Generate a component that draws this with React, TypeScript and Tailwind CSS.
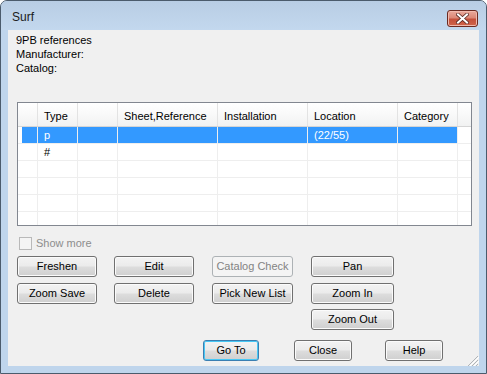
import React from "react";

const btn =
  "h-[21px] rounded-[3px] border border-[#707070] bg-[linear-gradient(#f3f3f3,#ebebeb_48%,#dddddd_52%,#cfcfcf)] shadow-[inset_0_0_0_1px_#fbfbfb] text-[11px] leading-none text-black flex items-center justify-center";
const btnDisabled =
  "h-[21px] rounded-[3px] border border-[#adb2b5] bg-[#f4f4f4] text-[11px] leading-none text-[#838383] flex items-center justify-center";
const btnDefault =
  "h-[21px] rounded-[3px] border border-[#3c7fb1] bg-[linear-gradient(#f3f3f3,#ebebeb_48%,#dddddd_52%,#cfcfcf)] shadow-[inset_0_0_0_1px_#48c8f5] text-[11px] leading-none text-black flex items-center justify-center";

const cols = [
  { w: "w-[40px]", label: "Type" },
  { w: "w-[40px]", label: "" },
  { w: "w-[100px]", label: "Sheet,Reference" },
  { w: "w-[90px]", label: "Installation" },
  { w: "w-[90px]", label: "Location" },
  { w: "w-[60px]", label: "Category" },
];

const rows = [
  { sel: true, cells: ["p", "", "", "", "(22/55)", ""] },
  { sel: false, cells: ["#", "", "", "", "", ""] },
  { sel: false, cells: ["", "", "", "", "", ""] },
  { sel: false, cells: ["", "", "", "", "", ""] },
  { sel: false, cells: ["", "", "", "", "", ""] },
  { sel: false, cells: ["", "", "", "", "", ""] },
];

const Grid = () => (
  <div className="ml-[9px] w-[455px] h-[124px] border border-[#828790] bg-white overflow-hidden">
    {/* header */}
    <div className="flex h-[24px] border-b border-[#d5d5d5] bg-[linear-gradient(#ffffff,#f9f9f9_50%,#f1f2f2)]">
      <div className="w-[20px] border-r border-[#e3e3e3]" />
      {cols.map((c, i) => (
        <div
          key={i}
          className={`${c.w} border-r border-[#e3e3e3] pl-[6px] pt-[3px] flex items-center whitespace-nowrap`}
        >
          {c.label}
        </div>
      ))}
      <div className="flex-1" />
    </div>
    {rows.map((r, i) => (
      <div key={i} className="flex h-[17px] border-b border-[#eeeeee]">
        <div className="w-[20px] border-r border-[#eeeeee] flex">
          {r.sel && <div className="ml-[4px] flex-1 bg-[#3399ff]" />}
        </div>
        {cols.map((c, j) => (
          <div
            key={j}
            className={`${c.w} border-r border-[#eeeeee] pl-[6px] flex items-center whitespace-nowrap ${
              r.sel ? "bg-[#3399ff] text-white" : "text-black"
            }`}
          >
            {r.cells[j]}
          </div>
        ))}
        <div className="flex-1" />
      </div>
    ))}
  </div>
);

export default function App() {
  return (
    <div className="w-[487px] h-[374px] bg-white font-['Liberation_Sans',Arial,sans-serif] text-[11px] text-black">
      <div className="w-[487px] h-[374px] rounded-t-[7px] border border-[#4b5b6c] bg-[#bfd5ec] flex flex-col overflow-hidden">
        {/* title bar */}
        <div className="h-[29px] flex justify-between bg-[linear-gradient(#b8cde4,#c3d8ee)]">
          <div className="pl-[11px] pt-[9px] text-[12px] leading-[15px] text-[#1b1b1b]">Surf</div>
          <div className="mt-[9px] mr-[8px] w-[31px] h-[17px] rounded-[3px] border border-[#6b2a21] bg-[linear-gradient(#e9a99c,#dc8877_45%,#c4503b_55%,#d0644a)] shadow-[inset_0_0_0_1px_#f0b9ad] flex items-center justify-center">
            <svg width="13" height="11" viewBox="0 0 13 11">
              <path d="M2 1.5 L11 9.5 M11 1.5 L2 9.5" stroke="#5a2a24" strokeWidth="3.6" strokeLinecap="square" />
              <path d="M2 1.5 L11 9.5 M11 1.5 L2 9.5" stroke="#ffffff" strokeWidth="2" strokeLinecap="square" />
            </svg>
          </div>
        </div>

        {/* client area */}
        <div className="relative ml-[7px] w-[471px] h-[336px] bg-[#f0f0f0] flex flex-col">
          <div className="pl-[8px] pt-[3px] leading-[14px]">
            <div>9PB references</div>
            <div>Manufacturer:</div>
            <div>Catalog:</div>
          </div>

          <div className="mt-[27px]">
            <Grid />
          </div>

          <div className="mt-[11px] ml-[11px] flex items-center h-[13px]">
            <div className="w-[13px] h-[13px] border border-[#b9b9b9] bg-[#f4f4f4]" />
            <span className="ml-[4px] text-[#8d8d8d] leading-none">Show more</span>
          </div>

          <div className="mt-[6px] pl-[9px] grid grid-cols-[97px_98px_99px_83px] grid-rows-[27px_26px_21px] items-start">
            <div className={`${btn} w-[80px]`}>Freshen</div>
            <div className={`${btn} w-[80px]`}>Edit</div>
            <div className={`${btnDisabled} w-[81px]`}>Catalog Check</div>
            <div className={`${btn} w-[83px]`}>Pan</div>
            <div className={`${btn} w-[80px]`}>Zoom Save</div>
            <div className={`${btn} w-[80px]`}>Delete</div>
            <div className={`${btn} w-[81px]`}>Pick New List</div>
            <div className={`${btn} w-[83px]`}>Zoom In</div>
            <div />
            <div />
            <div />
            <div className={`${btn} w-[83px]`}>Zoom Out</div>
          </div>

          <div className="mt-[10px] pl-[195px] flex">
            <div className={`${btnDefault} w-[56px]`}>Go To</div>
            <div className={`${btn} w-[58px] ml-[35px]`}>Close</div>
            <div className={`${btn} w-[58px] ml-[33px]`}>Help</div>
          </div>

          {/* size grip */}
          <svg className="absolute right-0 bottom-0" width="12" height="11" viewBox="0 0 12 11">
            <path d="M11 1 L1 11 M11 5 L5 11 M11 9 L9 11" stroke="#b0b4b8" strokeWidth="1" />
            <path d="M12 2 L2 12 M12 6 L6 12" stroke="#ffffff" strokeWidth="1" />
          </svg>
        </div>
      </div>
    </div>
  );
}
